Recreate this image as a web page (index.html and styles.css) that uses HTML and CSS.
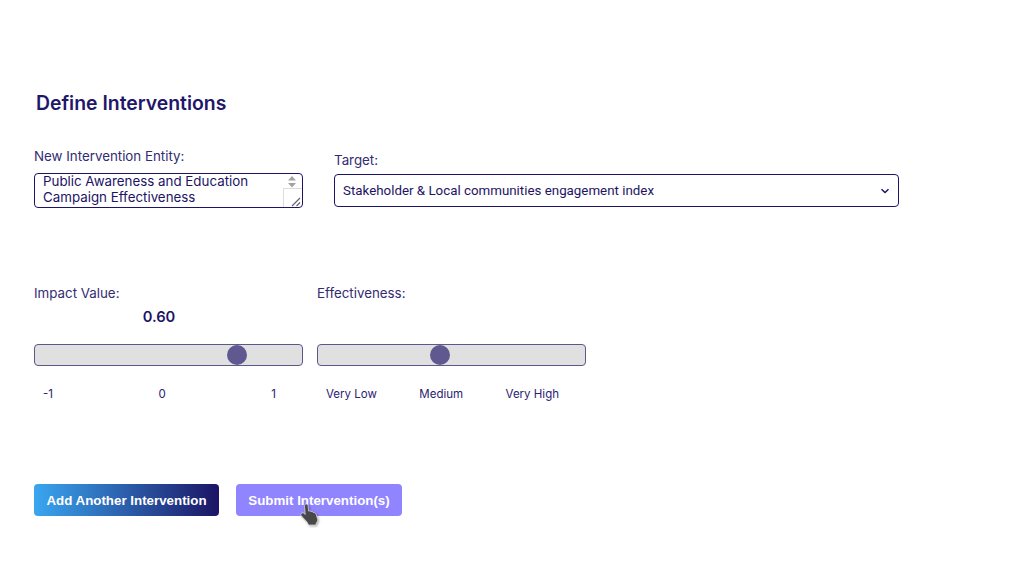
FILE: index.html
```html
<!DOCTYPE html>
<html lang="en">
<head>
<meta charset="utf-8">
<title>Define Interventions</title>
<link rel="stylesheet" href="styles.css">
</head>
<body>
<main class="page">
  <h2 class="title">Define Interventions</h2>
  <section class="row-top">
    <div class="field-entity">
      <label class="label" for="entity">New Intervention Entity:</label>
      <div class="entity-box">
        <textarea class="entity" id="entity" spellcheck="false">Public Awareness and Education Campaign Effectiveness</textarea>
        <svg class="entity-bar" width="19" height="33" viewBox="0 0 19 33" aria-hidden="true">
          <path d="M9 2l4 4.500H5zM9 13.500l4-4.500H5z" fill="#a3a3a3"/>
          <path d="M.5 33V14.500H19" fill="none" stroke="#dcdcdc"/>
          <path d="M9 32L17 24M13.500 32L17 28.500" fill="none" stroke="#666" stroke-width="1.200"/>
        </svg>
      </div>
    </div>
    <div class="field-target">
      <label class="label label-target" for="target">Target:</label>
      <select class="target" id="target">
        <option>Stakeholder &amp; Local communities engagement index</option>
      </select>
    </div>
  </section>
  <section class="row-sliders">
    <div class="slider-col">
      <label class="label">Impact Value:</label>
      <div class="value">0.60</div>
      <input class="range" type="range" min="-1" max="1" step="0.001" value="0.554">
      <div class="scale"><span>-1</span><span>0</span><span>1</span></div>
    </div>
    <div class="slider-col">
      <label class="label">Effectiveness:</label>
      <div class="value">&nbsp;</div>
      <input class="range" type="range" min="0" max="100" step="0.1" value="45.3">
      <div class="scale"><span>Very Low</span><span>Medium</span><span>Very High</span></div>
    </div>
  </section>
  <section class="actions">
    <button class="btn btn-add" type="button">Add Another Intervention</button>
    <div class="submit-wrap">
      <button class="btn btn-submit" type="button">Submit Intervention(s)</button>
      <svg class="cursor" width="20" height="23" viewBox="0 0 20 24" aria-hidden="true">
        <path d="M6 1C7.300 1 8 2 8 3L8.600 8.500C9.500 8 10.800 8.200 11 9C12 8.700 13.300 9 13.500 10C14.500 9.800 16 10.300 16.300 11.500L18 17C18.200 18.500 17.500 19.500 16.800 20.500L16 23L8.500 23L7 20L1 13.500C0 12.300 .5 11 1.500 10.500C2.700 10 4 10.500 5 12L4.300 3.500C4.200 2 5 1 6 1Z" fill="#484848" stroke="#fff" stroke-width=".6"/>
      </svg>
    </div>
  </section>
</main>
</body>
</html>
```
FILE: styles.css
```css
* { box-sizing: border-box; }
html, body { margin: 0; background: #fff; }
body { color: #1c1464; font-family: Inter, "Liberation Sans", sans-serif; }
.page { width: 1032px; height: 585px; padding: 91px 0 0 34px; overflow: hidden; }
.title { margin: 0 0 0 2px; font-size: 19.4px; line-height: 24px; font-weight: 600; color: #1f1769; }
.row-top { display: flex; margin-top: 33px; }
.field-entity { width: 269px; display: flex; flex-direction: column; }
.field-target { width: 565px; margin-left: 31px; display: flex; flex-direction: column; padding-top: 4px; }
.label { display: block; font-size: 13.33px; line-height: 16px; color: #322c72; }
.label-target { font-family: Inter, sans-serif; }
.entity-box {
  position: relative; width: 269px; height: 35px; margin-top: 9px;
  border: 1px solid #1c1464; border-radius: 4px; overflow: hidden; background: #fff;
}
.entity {
  display: block; width: 100%; height: 34px; margin-top: -1px; padding: 0 24px 0 8px;
  border: 0; outline: 0; overflow: hidden; resize: none; background: transparent;
  font: 13.33px/16px Inter, sans-serif; color: #1c1464;
}
.entity-bar { position: absolute; right: 0; top: 0; }
.target {
  display: block; width: 565px; height: 33px; margin-top: 6px; padding: 0 8px;
  appearance: none; -webkit-appearance: none;
  border: 1px solid #1c1464; border-radius: 4px; outline: 0;
  background: #fff url("data:image/svg+xml,%3Csvg xmlns='http://www.w3.org/2000/svg' width='10' height='6'%3E%3Cpath d='M1.500 1.200L5 4.500l3.500-3.300' fill='none' stroke='%231c1464' stroke-width='1.500'/%3E%3C/svg%3E") no-repeat right 8px center;
  font: 13.33px Roboto, sans-serif; color: #1c1464;
}
.row-sliders { display: flex; gap: 14px; margin-top: 77px; }
.slider-col { width: 269px; }
.value { margin-top: 6px; height: 20px; text-align: center; padding-right: 19px; font-size: 14.7px; line-height: 20px; font-weight: 600; color: #1c1464; }
.range {
  display: block; width: 269px; height: 22px; margin: 17px 0 0; padding: 0;
  appearance: none; -webkit-appearance: none; background: #e0e0e0;
  border: 1px solid #5d5790; border-radius: 4px; outline: 0;
}
.range::-webkit-slider-thumb {
  -webkit-appearance: none; appearance: none; width: 20px; height: 20px; border-radius: 50%;
  background: #5f5990; border: 0;
}
.scale { display: flex; justify-content: space-between; width: 242px; padding: 0 0 0 9px; margin-top: 21px; font-size: 11.5px; line-height: 15px; color: #2a2270; }
.actions { display: flex; gap: 17px; margin-top: 82px; }
.btn {
  display: block; height: 32px; border: 0; border-radius: 4px; color: #fff; cursor: pointer;
  font: bold 13.33px "Liberation Sans", sans-serif; padding: 0;
}
.btn-add { width: 185px; background: linear-gradient(90deg, #3aa6f0, #1c1464); }
.btn-submit { width: 166px; background: #9084ff; }
.submit-wrap { position: relative; }
.cursor { position: absolute; left: 64px; top: 19px; filter: drop-shadow(1px 1px 1px rgba(0,0,0,.35)); }
```
